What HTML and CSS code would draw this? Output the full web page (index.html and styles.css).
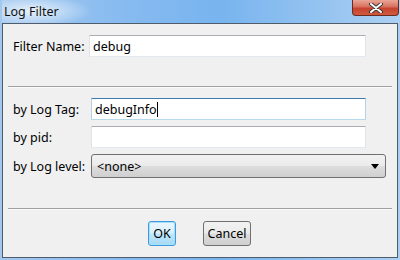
FILE: index.html
```html
<!DOCTYPE html>
<html lang="en">
<head>
    <meta charset="UTF-8">
    <title>Log Filter</title>
    <link rel="stylesheet" href="styles.css">
</head>
<body>
    <div class="window">
        <div class="titlebar">
            <span class="title">Log Filter</span>
            <button class="close" title="Close">
                <svg width="16" height="10" viewBox="0 0 16 10">
                    <path d="M3 1 L13 9 M13 1 L3 9" stroke="#3a3a3a" stroke-width="4" stroke-linecap="round"/>
                    <path d="M3 1 L13 9 M13 1 L3 9" stroke="#ffffff" stroke-width="2" stroke-linecap="round"/>
                </svg>
            </button>
        </div>
        <div class="client">
            <div class="name-row">
                <label class="label">Filter Name:</label>
                <div class="field name-field">debug</div>
            </div>
            <div class="separator"></div>
            <div class="filters">
                <label class="label">by Log Tag:</label>
                <div class="field focused">debugInfo<span class="caret"></span></div>
                <label class="label">by pid:</label>
                <div class="field"></div>
                <label class="label">by Log level:</label>
                <div class="select">
                    <span>&lt;none&gt;</span>
                    <span class="arrow"></span>
                </div>
            </div>
            <div class="separator second"></div>
            <div class="buttons">
                <button class="btn default">OK</button>
                <button class="btn cancel">Cancel</button>
            </div>
        </div>
    </div>
</body>
</html>
```

FILE: styles.css
```css
body {
    margin: 0;
    font-family: "Noto Sans", "Open Sans", sans-serif;
    font-size: 12.5px;
    color: #000;
}

.window {
    width: 400px;
    height: 260px;
    box-sizing: border-box;
    padding: 0 2px 2px;
    display: flex;
    flex-direction: column;
    background: linear-gradient(90deg, #a3c8ee 0%, #88bbf0 30%, #78b4ef 55%, #94c3f0 80%, #acd0f2 100%);
}

.titlebar {
    height: 23px;
    display: flex;
    align-items: flex-start;
    justify-content: space-between;
    background: radial-gradient(ellipse 60px 16px at 30px 11px, rgba(235, 244, 252, 0.95), rgba(235, 244, 252, 0) 100%);
}

.title {
    margin: 3px 0 0 2px;
    font-size: 12.5px;
    color: #111;
}

.close {
    width: 47px;
    height: 16px;
    margin-right: -1px;
    padding: 0;
    border: 1px solid #6b2a22;
    border-top: none;
    border-radius: 0 0 4px 4px;
    background: linear-gradient(#e9a697 0%, #d8705d 45%, #c5432f 55%, #cf5a3e 100%);
    display: flex;
    align-items: center;
    justify-content: center;
}

.client {
    flex: 1;
    border: 1px solid #4e5c6c;
    background: #f0f0f0;
    padding: 11px 11px 0 10px;
}

.name-row {
    display: grid;
    grid-template-columns: 76px 277px;
    align-items: center;
}

.label {
    white-space: nowrap;
}

.field {
    height: 22px;
    box-sizing: border-box;
    padding: 2px 3px 0;
    line-height: 17px;
    background: #fff;
    border: 1px solid #e2e3ea;
    border-top-color: #abadb3;
    border-bottom-color: #e3e9ef;
    border-radius: 1px;
}

.field.focused {
    border-color: #b5cfe7;
    border-top-color: #3d7bad;
    border-bottom-color: #b7d9ed;
}

.caret {
    display: inline-block;
    width: 1px;
    height: 15px;
    vertical-align: -3px;
    background: #000;
}

.separator {
    height: 1px;
    margin: 29px -6px 0 -5px;
    background: #a0a0a0;
    border-bottom: 1px solid #fafafa;
}

.separator.second {
    margin-top: 30px;
}

.filters {
    margin-top: 10px;
    display: grid;
    grid-template-columns: 78px 275px;
    row-gap: 6px;
    align-items: center;
}

.select {
    grid-column: 2;
    width: 295px;
    height: 24px;
    box-sizing: border-box;
    padding: 0 6px 0 5px;
    display: flex;
    align-items: center;
    justify-content: space-between;
    border: 1px solid #707070;
    border-radius: 3px;
    background: linear-gradient(#f2f2f2 0%, #ebebeb 48%, #dddddd 52%, #cfcfcf 100%);
}

.arrow {
    width: 0;
    height: 0;
    border-left: 4px solid transparent;
    border-right: 4px solid transparent;
    border-top: 5px solid #000;
}

.buttons {
    margin-top: 11px;
    display: flex;
    justify-content: center;
    gap: 27px;
}

.btn {
    height: 25px;
    padding: 0;
    font-family: inherit;
    font-size: 12.5px;
    color: #000;
    border: 1px solid #707070;
    border-radius: 3px;
    background: linear-gradient(#f2f2f2 0%, #ebebeb 48%, #dddddd 52%, #cfcfcf 100%);
}

.btn.cancel {
    width: 48px;
}

.btn.default {
    width: 28px;
    border-color: #3c9be0;
    box-shadow: inset 0 0 0 1px #a6e0fb;
    background: linear-gradient(#eaf6fd 0%, #d9f0fc 48%, #bee6fd 52%, #a7d9f5 100%);
}
```
